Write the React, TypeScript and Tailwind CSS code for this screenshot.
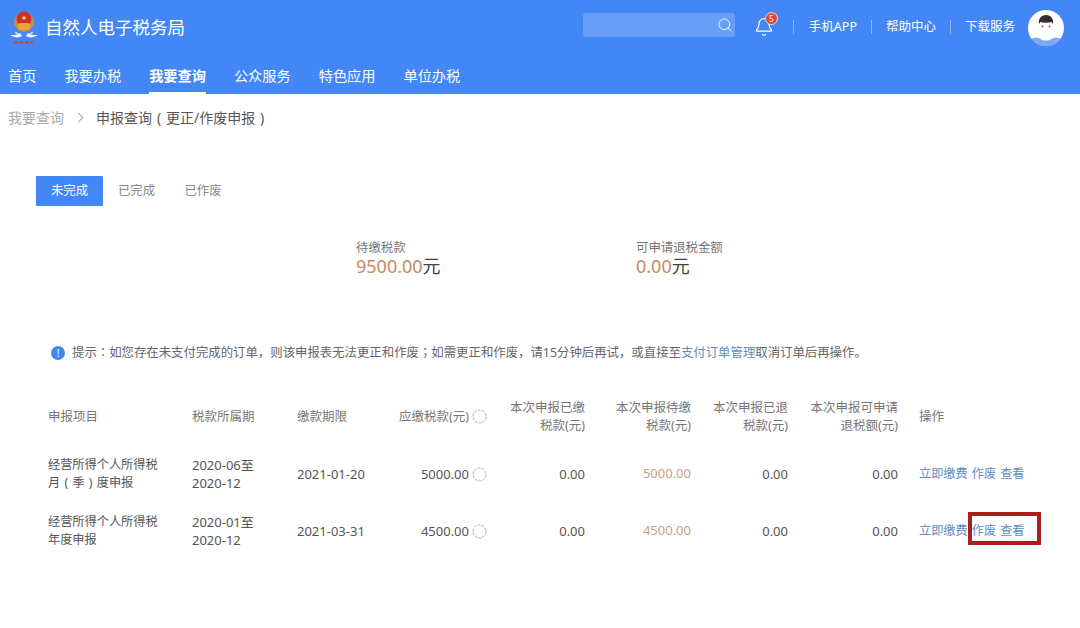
import { Bell, Search } from "lucide-react";

const FONT = "font-['Noto_Sans','Noto_Sans_CJK_SC',sans-serif]";
const CENTERED = "font-['Noto_Sans_CJK_TC',sans-serif]";
const COLS = "grid grid-cols-[144px_105px_73px_118px_97px_106px_97px_110px_1fr] items-center";

const navItems = ["首页", "我要办税", "我要查询", "公众服务", "特色应用", "单位办税"];

// 全角括号，括号居中显示
function Paren({ children }: { children: string }) {
  return <span className="inline-block w-[1em] text-center">{children}</span>;
}

const rows = [
  {
    name: "经营所得个人所得税",
    kind: (
      <>
        月<Paren>(</Paren>季<Paren>)</Paren>度申报
      </>
    ),
    period: ["2020-06至", "2020-12"],
    deadline: "2021-01-20",
    due: "5000.00",
    pending: "5000.00",
  },
  {
    name: "经营所得个人所得税",
    kind: "年度申报",
    period: ["2020-01至", "2020-12"],
    deadline: "2021-03-31",
    due: "4500.00",
    pending: "4500.00",
  },
];

function Emblem() {
  return (
    <svg width="30" height="38" viewBox="0 0 30 38">
      <path d="M1 27c4 3 9 3 12 1l-2-3c-3 2-6 2-10 2zM29 27c-4 3-9 3-12 1l2-3c3 2 6 2 10 2z" fill="#f4f6fb" />
      <circle cx="15" cy="14" r="10" fill="#c9903f" />
      <circle cx="15" cy="11" r="7.5" fill="#d0302c" />
      <rect x="9" y="15" width="12" height="7" rx="3" fill="#e8a63c" />
      <circle cx="15" cy="10" r="1.8" fill="#f3d24a" />
      <path d="M6 24l3 2M24 24l-3 2" stroke="#dfe8f8" strokeWidth="1.5" />
      <path d="M5 34.5h19" stroke="#c4483f" strokeWidth="2.5" strokeDasharray="4 1.5" />
    </svg>
  );
}

function Avatar() {
  return (
    <svg width="36" height="36" viewBox="0 0 36 36">
      <circle cx="18" cy="18" r="18" fill="#ffffff" />
      <path d="M3.5 29c4-2 7-1 9 0 3 2 8 2 11 0 2-1 5-2 9 0a18 18 0 0 1-29 0z" fill="#7ea9f0" />
      <path d="M11 14c-1-6 3-9 7-9s8 3 7 9l-1.500-2c-3 1-8 1-11 0z" fill="#33302f" />
      <circle cx="14.5" cy="16.5" r="1" fill="#8a5a50" />
      <circle cx="21.5" cy="16.5" r="1" fill="#8a5a50" />
    </svg>
  );
}

function Spinner() {
  return (
    <svg width="15" height="15" viewBox="0 0 15 15" className="shrink-0">
      <circle cx="7.5" cy="7.5" r="6.5" fill="none" stroke="#9a9a9a" strokeWidth="0.8" strokeDasharray="3 1" />
    </svg>
  );
}

function Divider() {
  return <span className="w-px h-[14px] bg-white/40" />;
}

function Header() {
  return (
    <header className="bg-[#4287f5] h-[94px] text-white">
      <div className="flex items-center h-[54px] pl-[9px]">
        <Emblem />
        <span className="ml-[6px] text-[17.5px] whitespace-nowrap">自然人电子税务局</span>
        <div className="ml-auto flex items-center">
          <div className="w-[152px] h-[24px] -mt-[5px] bg-white/20 rounded-[3px] flex items-center justify-end pr-[2px]">
            <Search size={16} strokeWidth={1.3} />
          </div>
          <div className="relative ml-[19px] mr-[19px] w-[20px] h-[24px] flex items-center justify-center">
            <Bell size={20} strokeWidth={1.5} />
            <span className="absolute -top-[3px] -right-[4px] w-[13px] h-[13px] rounded-full bg-[#e0483e] border border-white/70 text-[8px] leading-[11px] text-center">
              5
            </span>
          </div>
          <Divider />
          <span className="ml-[15px] mr-[14px] text-[12.5px]">手机APP</span>
          <Divider />
          <span className="mx-[14px] text-[12.5px]">帮助中心</span>
          <Divider />
          <span className="ml-[14px] mr-[13px] text-[12.5px]">下载服务</span>
          <div className="mr-[16px] mt-[2px]">
            <Avatar />
          </div>
        </div>
      </div>
      <nav className="flex pl-[8px] gap-[28px] h-[40px]">
        {navItems.map((item) => (
          <a
            key={item}
            className={
              item === "我要查询"
                ? "h-full pt-[11px] text-[14.2px] font-bold border-b-2 border-white"
                : "h-full pt-[11px] text-[14.2px]"
            }
          >
            {item}
          </a>
        ))}
      </nav>
    </header>
  );
}

function Summary({ label, value, width }: { label: string; value: string; width: string }) {
  return (
    <div className={width}>
      <div className="text-[12.4px] leading-[18px] text-[#777]">{label}</div>
      <div className="text-[18px] leading-[24px] -mt-[3px] text-[#444]">
        <span className="text-[#c58a5f]">{value}</span>元
      </div>
    </div>
  );
}

function Table() {
  const head = "text-[12.5px] leading-[18px] text-[#777] font-normal";
  const cell = "text-[13px] leading-[18px] text-[#555]";
  return (
    <div className="mt-[31px] ml-[48px] mr-[32px]">
      <div className={`${COLS} h-[46px] mb-[6px]`}>
        <div className={head}>申报项目</div>
        <div className={head}>税款所属期</div>
        <div className={head}>缴款期限</div>
        <div className={`${head} flex items-center justify-end gap-[3px] pr-[1px] whitespace-nowrap`}>
          应缴税款(元) <Spinner />
        </div>
        <div className={`${head} text-right`}>本次申报已缴<br />税款(元)</div>
        <div className={`${head} text-right`}>本次申报待缴<br />税款(元)</div>
        <div className={`${head} text-right`}>本次申报已退<br />税款(元)</div>
        <div className={`${head} text-right`}>本次申报可申请<br />退税额(元)</div>
        <div className={`${head} pl-[21px]`}>操作</div>
      </div>
      {rows.map((row) => (
        <div key={row.deadline} className={`${COLS} h-[57px]`}>
          <div className="text-[12.2px] leading-[18px] text-[#555]">
            {row.name}
            <br />
            {row.kind}
          </div>
          <div className={cell}>
            {row.period[0]}
            <br />
            {row.period[1]}
          </div>
          <div className={cell}>{row.deadline}</div>
          <div className={`${cell} flex items-center justify-end gap-[3px] pr-[1px]`}>
            {row.due} <Spinner />
          </div>
          <div className={`${cell} text-right`}>0.00</div>
          <div className="text-[13px] text-right text-[#c9a184]">{row.pending}</div>
          <div className={`${cell} text-right`}>0.00</div>
          <div className={`${cell} text-right`}>0.00</div>
          <div className="pl-[21px] relative">
            <div className="text-[12.2px] text-[#5d8dc4] whitespace-nowrap flex gap-[4px]">
              <span>立即缴费</span>
              <span>作废</span>
              <span>查看</span>
            </div>
            {row.deadline === "2021-03-31" && (
              <span className="absolute left-[70px] -top-[10px] w-[73px] h-[33px] border-[4px] border-[#a8201a]" />
            )}
          </div>
        </div>
      ))}
    </div>
  );
}

export default function App() {
  return (
    <div className={`${FONT} w-[1080px] h-[628px] bg-white overflow-hidden`}>
      <Header />
      <div className="flex items-center h-[48px] pb-[2px] pl-[8px] text-[14px]">
        <span className="text-[#aaa]">我要查询</span>
        <span className="ml-[11px] mr-[14px] w-[7px] h-[7px] border-t border-r border-[#aaa] rotate-45" />
        <span className="text-[#555]">
          申报查询<Paren>(</Paren>更正/作废申报<Paren>)</Paren>
        </span>
      </div>
      <div className="flex mt-[34px] ml-[36px] text-[12.4px]">
        <div className="w-[67px] h-[30px] bg-[#4287f5] text-white flex items-center justify-center rounded-[1px]">未完成</div>
        <div className="w-[67px] h-[30px] text-[#888] flex items-center justify-center">已完成</div>
        <div className="w-[66px] h-[30px] text-[#888] flex items-center justify-center">已作废</div>
      </div>
      <div className="flex mt-[33px] ml-[356px]">
        <Summary label="待缴税款" value="9500.00" width="w-[280px]" />
        <Summary label="可申请退税金额" value="0.00" width="w-[200px]" />
      </div>
      <div className="flex items-center mt-[65px] ml-[51px] text-[12.4px] text-[#666] whitespace-nowrap">
        <span className="w-[14px] h-[14px] rounded-full bg-[#4287f5] text-white text-[10px] leading-[14px] text-center mr-[7px]">!</span>
        <span>
          提示<span className={CENTERED}>：</span>如您存在未支付完成的订单，则该申报表无法更正和作废<span className={CENTERED}>；</span>如需更正和作废，请15分钟后再试，或直接至
          <span className="text-[#5d8dc4]">支付订单管理</span>
          取消订单后再操作。
        </span>
      </div>
      <Table />
    </div>
  );
}
